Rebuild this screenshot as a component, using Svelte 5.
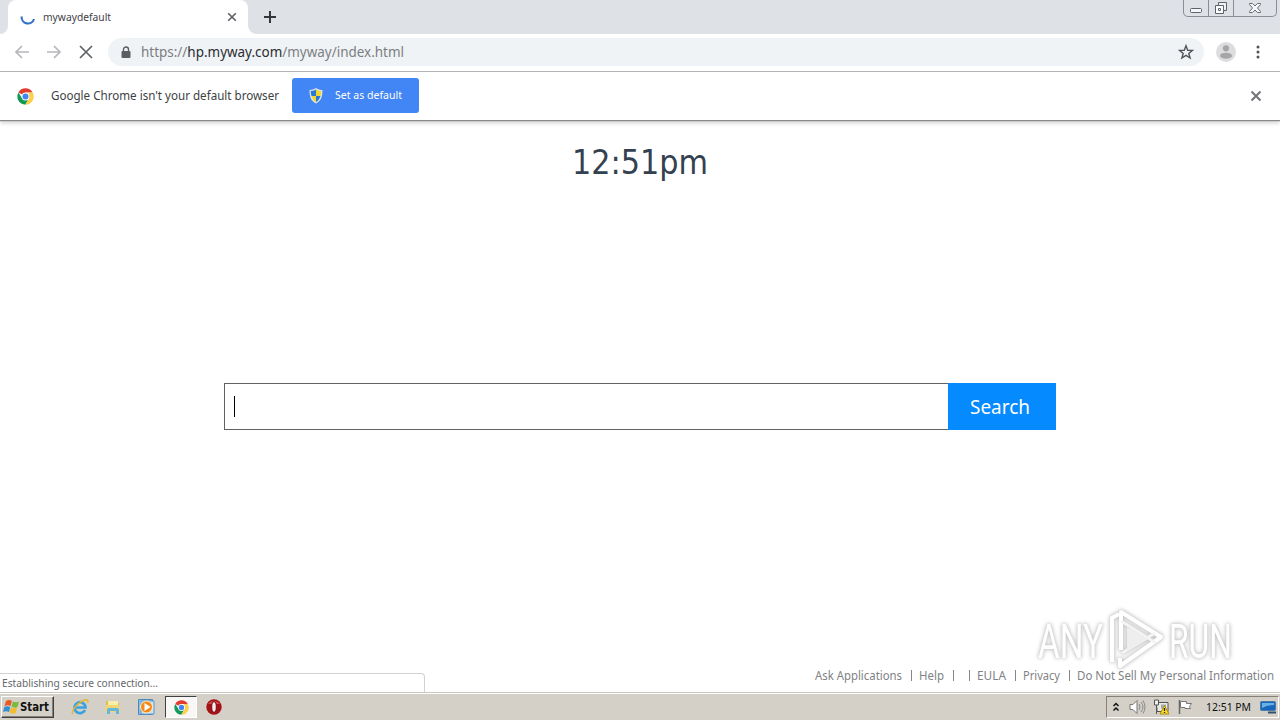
<script lang="ts">
  const links = [
    { text: 'Ask Applications', width: 87 },
    { text: 'Help', width: 25 },
    { text: '', width: 0 },
    { text: 'EULA', width: 29 },
    { text: 'Privacy', width: 37 },
    { text: 'Do Not Sell My Personal Information', width: 197 }
  ];
</script>

{#snippet label(text: string, width: number, size: number, height: number, cls: string)}
  <svg class={cls} {width} {height} overflow="visible">
    <text x="0" y={Math.round(height / 2 + size * 0.36)} font-size={size} textLength={width} lengthAdjust="spacingAndGlyphs">{text}</text>
  </svg>
{/snippet}

{#snippet chrome(size: number)}
  <svg width={size} height={size} viewBox="0 0 48 48">
    <circle cx="24" cy="24" r="23" fill="#fff" />
    <path d="M24 24 4 12.5A23 23 0 0 1 44 12.5L24 13Z" fill="#e33b2e" />
    <path d="M4 12.5A23 23 0 0 0 23.5 47L33 30 24 24 14 28Z" fill="#159957" />
    <path d="M44 12.5A23 23 0 0 1 23.5 47L34 29 31 13Z" fill="#fcd04b" />
    <circle cx="24" cy="24" r="11" fill="#fff" />
    <circle cx="24" cy="24" r="8.5" fill="#4285f4" />
  </svg>
{/snippet}

<div class="screen">
  <header class="tabs">
    <div class="edge"></div>
    <div class="tab">
      <svg class="spinner" width="16" height="16" viewBox="0 0 16 16"><path d="M1.7 7.500a6.300 6.300 0 0 0 12.300 2.500" fill="none" stroke="#3472c9" stroke-width="2.200" /></svg>
      {@render label('mywaydefault', 68, 11, 18, 'tabtext')}
      <svg class="tabclose" width="10" height="10"><path d="m1.2 1.2 7.6 7.6m0-7.6L1.2 8.8" stroke="#5c6066" stroke-width="1.6" /></svg>
    </div>
    <svg class="plus" width="14" height="14"><path d="M7 1v12M1 7h12" stroke="#33373c" stroke-width="2" /></svg>
    <div class="controls">
      <span><svg width="14" height="16"><rect x="1.5" y="8.5" width="11" height="4" rx="1" fill="#f5f6f8" stroke="#5d626b" /></svg></span>
      <span><svg width="14" height="16"><path d="M4.500 2.500h8v8h-8z" fill="#eff1f4" stroke="#5d626b" /><path d="M1.500 5.500h8v8h-8z" fill="#fff" stroke="#5d626b" /><path d="M4.500 8.500h2v2h-2z" fill="none" stroke="#5d626b" /></svg></span>
      <span><svg width="14" height="16"><path d="M1.500 3.500h3L7 6l2.500-2.500h3v1L9.500 8l3 3.500v1h-3L7 10l-2.500 2.500h-3v-1L4.500 8l-3-3.500Z" fill="#f7f8f9" stroke="#666b74" /></svg></span>
    </div>
  </header>

  <nav class="toolbar">
    <svg class="nav" width="92" height="16" fill="none">
      <path d="M15 8H2m6-6L2 8l6 6" stroke="#b5b7ba" stroke-width="1.7" />
      <path d="M33 8h13m-6-6 6 6-6 6" stroke="#b5b7ba" stroke-width="1.7" />
      <path d="m66 2 12 12m0-12L66 14" stroke="#606469" stroke-width="1.700" />
    </svg>
    <div class="address">
      <svg class="lock" width="10" height="13"><path d="M2.500 6V3.500a2.500 2.500 0 0 1 5 0V6" fill="none" stroke="#5a5e63" stroke-width="1.4" /><rect x=".5" y="5" width="9" height="7" rx="1" fill="#5a5e63" /></svg>
      <svg class="url" width="264" height="22" overflow="visible"><text x="0" y="16" font-size="14.500" textLength="263" lengthAdjust="spacingAndGlyphs"><tspan>https://</tspan><tspan class="host">hp.myway.com</tspan><tspan>/myway/index.html</tspan></text></svg>
      <svg class="star" width="16" height="16"><path d="m8 1.700 1.700 4.500 4.800.2-3.700 3 1.300 4.600L8 11.400 3.900 14l1.300-4.600-3.700-3 4.800-.2Z" fill="none" stroke="#50545a" stroke-width="1.400" /></svg>
    </div>
    <svg class="avatar" width="20" height="20"><circle cx="10" cy="10" r="10" fill="#dddddf" /><circle cx="10" cy="6.300" r="3.100" fill="#a5a5a7" /><ellipse cx="10" cy="13.700" rx="6" ry="3" fill="#a5a5a7" /></svg>
    <svg class="dots" width="4" height="14" fill="#50545a"><circle cx="2" cy="2" r="1.500" /><circle cx="2" cy="7" r="1.500" /><circle cx="2" cy="12" r="1.500" /></svg>
  </nav>

  <section class="infobar">
    <span class="logo">{@render chrome(17)}</span>
    {@render label("Google Chrome isn't your default browser", 228, 12.5, 20, 'infotext')}
    <button class="default">
      <svg width="14" height="16" viewBox="0 0 14 16"><path d="M7 0Q4 2 .5 2C.5 9 2 13 7 15.500 12 13 13.500 9 13.500 2 10 2 7 0 7 0Z" fill="#d9e3e5" /><path d="M7 1.500Q4.500 3 1.800 3 1.800 6 2.500 8H7Z" fill="#2878d5" /><path d="M7 1.500Q9.500 3 12.200 3 12.200 6 11.500 8H7Z" fill="#f3d630" /><path d="M2.500 8Q4 12.500 7 14V8Z" fill="#f3d630" /><path d="M11.500 8Q10 12.500 7 14V8Z" fill="#2878d5" /></svg>
      {@render label('Set as default', 67, 11.5, 20, 'white')}
    </button>
    <svg class="infoclose" width="12" height="12"><path d="m1.500 1.500 9 9m0-9-9 9" stroke="#707377" stroke-width="2" /></svg>
  </section>

  <main>
    <div class="clock">{@render label('12:51pm', 136, 34.5, 44, 'time')}</div>
    <div class="search">
      <div class="field"><i></i></div>
      <button>{@render label('Search', 60, 20, 28, 'white')}</button>
    </div>
    <svg class="watermark" width="220" height="76" viewBox="1030 600 220 76">
      <g class="mark">
        <text x="1038" y="658" font-size="49" textLength="65" lengthAdjust="spacingAndGlyphs">ANY</text>
        <text x="1169" y="658" font-size="49" textLength="63" lengthAdjust="spacingAndGlyphs">RUN</text>
        <path d="M1112 662V618l7-4M1121 650V612l40 25-41 29v-8" fill="none" stroke="#fff" stroke-width="4" stroke-linejoin="round" />
        <path d="M1121 621l35 22M1122 653l33-20" fill="none" stroke="#f4f4f4" stroke-width="3" />
        <path d="m1127 627 20 11-20 13Z" fill="#eee" />
      </g>
    </svg>
    <footer>
      {#each links as link, i}
        {#if i > 0}<b class:gap={i === 3}></b>{/if}
        {#if link.text}{@render label(link.text, link.width, 12.5, 18, 'link')}{/if}
      {/each}
    </footer>
    <div class="status">{@render label('Establishing secure connection...', 156, 11, 18, 'statustext')}</div>
  </main>

  <div class="taskbar">
    <button class="start">
      <svg width="17" height="16" viewBox="0 0 17 16"><path d="M3 2q3-2 6 0L7.500 7Q5 5.500 1.500 7Z" fill="#e95b25" /><path d="M10 2.500q3 1.500 6 0L14.500 8q-3 1.500-6-.5Z" fill="#79b93b" /><path d="M1.300 8q3-1.500 6 0L6 13q-3-1.500-6 0Z" fill="#328fd2" /><path d="M8.200 8.500q3 1.500 6 0L12.500 14q-3 1.500-6-.500Z" fill="#f2bd28" /></svg>
      {@render label('Start', 29, 11.5, 18, 'starttext')}
    </button>
    <div class="quick">
      <svg width="18" height="18" viewBox="0 0 18 18"><path d="M14 12A5.500 5.500 0 1 1 14.500 9.500H5" fill="none" stroke="#3aa2df" stroke-width="2.700" /><path d="M2 16C-1 14 7 4 14 2q4-1 2.500 3" fill="none" stroke="#e4b52e" stroke-width="1.400" /></svg>
      <svg width="18" height="18" viewBox="0 0 18 18"><path d="M2 3h6l1 2h6v9H2Z" fill="#dfbd51" /><path d="M4 3h10v5H4Z" fill="#f9edaa" /><path d="M2 7h13l1 7H1Z" fill="#f0d573" /><path d="M3 16v-4q0-2 2-2h8q2 0 2 2v4h-3v-3H6v3Z" fill="#63b7df" /></svg>
      <svg width="18" height="18" viewBox="0 0 18 18"><path d="M1.500 1.500h14v15h-14Z" fill="#8fc1e8" stroke="#4d88bd" /><path d="M4 3h13v13H4Z" fill="#c9e4f5" stroke="#5b96cb" /><circle cx="9.500" cy="9" r="6" fill="#f38a1d" stroke="#fff0c6" /><path d="m7.500 5 6 4-6 4Z" fill="#fff" /></svg>
    </div>
    <div class="active">{@render chrome(15)}</div>
    <svg class="opera" width="16" height="16"><circle cx="8" cy="8" r="7.700" fill="#a61118" /><path d="M2 5a7 6 0 0 1 12 0Z" fill="#cf4b4b" /><ellipse cx="8" cy="8" rx="2.300" ry="5.300" fill="#f7eceb" stroke="#720a0d" /></svg>
    <div class="tray">
      <svg class="chevron" width="8" height="11" fill="none"><path d="m1.500 4 2.500-2.500L6.500 4M1.500 8.500 4 6l2.500 2.500" stroke="#111" stroke-width="1.500" /></svg>
      <svg class="speaker" width="17" height="16" fill="none"><path d="M1 5.500h3l4-4v13l-4-4H1Z" fill="#fff" stroke="#777" /><path d="M10 5q2 3 0 6M12 3q4 5 0 10M14 1.500q4 6.500 0 13" stroke="#888" /></svg>
      <svg class="network" width="18" height="16"><path d="M6 3.500h9v9H4v-4" fill="#e9e9e5" stroke="#555" /><path d="M8 5.500h5v4H8Z" fill="#a4abae" /><path d="M1.500 1v5h4V1ZM3.500 6v9" fill="#eee" stroke="#555" /><path d="m11.500 6.500 4.500 8.500H7Z" fill="#ffdf25" stroke="#ad8b11" /><path d="M11.500 9v3m0 1v1" stroke="#222" stroke-width="1.300" /></svg>
      <svg class="flag" width="16" height="16"><path d="M2.500 1v14" stroke="#666" stroke-width="1.500" /><path d="M3.500 2.500h6v2h5l-2 3 1 2H8v-1H3.500Z" fill="#fff" stroke="#777" /></svg>
      {@render label('12:51 PM', 45, 11, 18, 'traytime')}
      <svg class="monitor" width="17" height="14"><rect x=".5" y="1.500" width="15" height="9" rx="1" fill="#1967bd" stroke="#4a7aa7" /><path d="M2 3h12v2Q7 5 2 8Z" fill="#6ab0e5" /><path d="M8 12.500h8" stroke="#324f6a" stroke-width="2" /></svg>
    </div>
  </div>
</div>

<style>
  :global(body) { background: #fff; overflow: hidden; }
  .screen { width: 1280px; height: 720px; display: flex; flex-direction: column; background: #fff; font-family: "Noto Sans", sans-serif; }
  svg { display: block; flex: none; }
  button { border: 0; padding: 0; font: inherit; }
  .tabs { height: 34px; flex: none; display: flex; align-items: flex-start; background: #dee1e6; }
  .edge { width: 8px; height: 34px; background: #fff; }
  .edge::before { content: ''; display: block; height: 34px; border-radius: 0 0 8px 0; background: #dee1e6; }
  .tab { position: relative; width: 240px; height: 34px; background: #fff; border-radius: 8px 8px 0 0; display: flex; align-items: center; box-sizing: border-box; padding-left: 12px; }
  .tab::after { content: ''; position: absolute; left: 240px; bottom: 0; width: 8px; height: 8px; background: radial-gradient(circle at 8px 0, #dee1e6 7.5px, #fff 8px); }
  :global(.tabtext) { fill: #3f4247; margin-left: 7px; }
  .tabclose { margin-left: 116px; }
  .plus { margin: 10px 0 0 15px; }
  .controls { height: 17px; width: 94px; margin: 0 3px 0 auto; box-sizing: border-box; border: 1px solid #888d96; border-top: 0; border-radius: 0 0 5px 5px; display: flex; background: #dee1e6; overflow: hidden; }
  .controls span { flex: 0 0 25px; box-sizing: border-box; border-right: 1px solid #888d96; display: flex; justify-content: center; }
  .controls span:last-child { flex: 1; border: 0; }
  .toolbar { height: 38px; flex: none; box-sizing: border-box; border-bottom: 1px solid #b3b2b5; padding-bottom: 1px; display: flex; align-items: center; background: #fff; }
  .nav { margin-left: 14px; }
  .address { width: 1096px; height: 28px; margin-left: 2px; background: #f0f3f5; border-radius: 14px; display: flex; align-items: center; }
  .lock { margin-left: 13px; }
  .url { margin-left: 10px; fill: #7a7e83; }
  .host { fill: #292c31; }
  .star { margin: 0 10px 0 auto; }
  .avatar { margin-left: 12px; }
  .dots { margin-left: 20px; }
  .infobar { height: 48px; flex: none; display: flex; align-items: center; box-shadow: 0 1px 1px #888, 0 3px 4px #d0d0d0; z-index: 1; }
  .logo { margin-left: 17px; width: 34px; }
  :global(.infotext) { fill: #3d3f43; margin-bottom: 2px; }
  .default { margin-left: 13px; width: 127px; height: 35px; margin-top: -1px; background: #4285f4; border-radius: 3px; box-sizing: border-box; display: flex; align-items: center; padding-left: 17px; gap: 12px; }
  .default > :global(.white) { margin-bottom: 2px; }
  :global(.white) { fill: #fff; }
  .infoclose { margin: 0 18px 0 auto; }
  main { position: relative; height: 573px; flex: none; display: flex; flex-direction: column; }
  .clock { height: 263px; flex: none; padding-top: 20px; box-sizing: border-box; display: flex; justify-content: center; align-items: flex-start; }
  :global(.time) { font-family: "DejaVu Sans Condensed", "DejaVu Sans", sans-serif; fill: #344150; }
  .search { display: flex; width: 832px; height: 47px; margin: 0 auto; }
  .field { width: 724px; box-sizing: border-box; border: 1px solid #626266; border-right: 0; display: flex; align-items: center; padding-left: 9px; }
  .field i { width: 1px; height: 21px; background: #000; }
  .search button { width: 108px; background: #058aff; display: flex; align-items: center; padding-left: 22px; }
  footer { position: relative; margin-top: auto; height: 33px; box-sizing: border-box; padding: 0 6px 3px 0; display: flex; justify-content: flex-end; align-items: center; }
  footer b { width: 1px; height: 11px; background: #85878a; margin: 0 7px 0 9px; }
  footer b.gap { margin-left: 8px; }
  :global(.link) { fill: #808285; }
  .watermark { position: absolute; left: 1030px; top: 480px; }
  .mark { filter: drop-shadow(0 0 2px #c0c0c0) drop-shadow(0 0 1px #ddd); }
  .mark text { font-family: Roboto, sans-serif; font-weight: 400; fill: #fff; }
  .status { position: absolute; left: 0; bottom: 0; width: 425px; height: 20px; box-sizing: border-box; border: 1px solid #d0d2d4; border-left: 0; border-bottom: 0; border-radius: 0 4px 0 0; background: #fff; padding-left: 2px; }
  :global(.statustext) { fill: #66686c; }
  .taskbar { flex: none; height: 27px; box-sizing: border-box; border-top: 1px solid #fff; box-shadow: 0 -1px #c9c6bf; background: #d4d0c8; display: flex; align-items: center; z-index: 2; }
  .start { width: 53px; height: 22px; margin-left: 1px; box-sizing: border-box; border: 1px solid; border-color: #fff #404040 #404040 #fff; box-shadow: inset -1px -1px #858179; background: #d4d0c8; display: flex; align-items: center; padding-left: 1px; gap: 0; }
  :global(.starttext) { font-weight: 700; fill: #111; font-family: "DejaVu Sans Condensed", "DejaVu Sans", sans-serif; }
  .quick { display: flex; margin-left: 17px; gap: 15px; }
  .active { width: 32px; height: 22px; margin-left: 10px; box-sizing: border-box; border: 1px solid; border-color: #404040 #fff #fff #404040; background: #f8f7f5; display: flex; align-items: center; justify-content: center; }
  .opera { margin-left: 9px; }
  .tray { margin: 0 1px 0 auto; width: 173px; height: 22px; box-sizing: border-box; border: 1px solid; border-color: #858179 #fff #fff #858179; display: flex; align-items: center; }
  .chevron { margin-left: 5px; }
  .speaker { margin-left: 9px; }
  .network { margin-left: 7px; }
  .flag { margin-left: 6px; }
  :global(.traytime) { fill: #111; margin-left: 13px; }
  .monitor { margin-left: 9px; }
</style>
